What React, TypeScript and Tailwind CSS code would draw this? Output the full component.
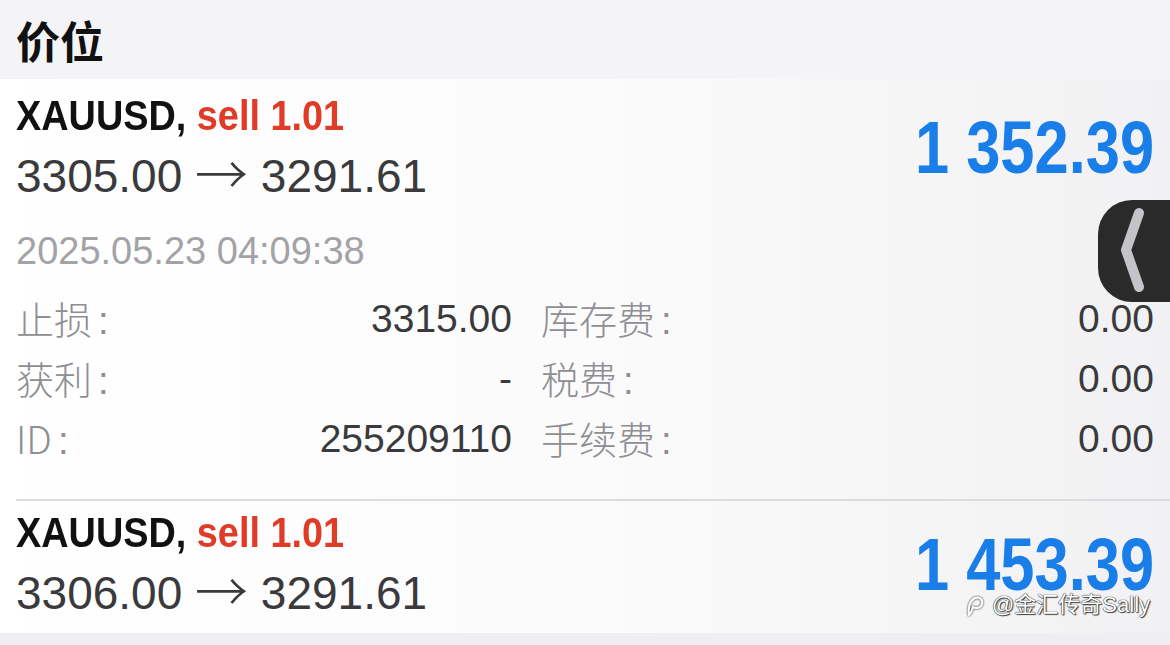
import React from 'react';

const latin = "font-['Liberation_Sans','Noto_Sans_CJK_SC',sans-serif]";

type Detail = { label: string; value: string };

function Label({ text }: { text: string }) {
  return (
    <span className="text-[38px] font-light text-[#8e8e93] font-['Noto_Sans_CJK_SC',sans-serif]">
      {text}
      <span className="ml-[6px] font-['Liberation_Sans',sans-serif]">:</span>
    </span>
  );
}

function DetailGrid({ rows }: { rows: [Detail, Detail][] }) {
  return (
    <div className="mt-[18px] grid grid-cols-[496px_1fr] gap-x-[29px] pr-4">
      {rows.map(([l, r], i) => (
        <React.Fragment key={i}>
          <div className="flex h-[60px] items-center justify-between">
            <Label text={l.label} />
            <span className={`${latin} text-[39px] text-[#3a3a3c]`}>{l.value}</span>
          </div>
          <div className="flex h-[60px] items-center justify-between">
            <Label text={r.label} />
            <span className={`${latin} text-[39px] text-[#3a3a3c]`}>{r.value}</span>
          </div>
        </React.Fragment>
      ))}
    </div>
  );
}

function PositionHead({ open, close, profit }: { open: string; close: string; profit: string }) {
  return (
    <div className="flex items-center justify-between pr-4">
      <div className="flex flex-col">
        <div className={`${latin} origin-left scale-x-[0.88] text-[43px] leading-[50px] font-bold text-[#111]`}>
          XAUUSD, <span className="text-[#df3b27]">sell 1.01</span>
        </div>
        <div className={`${latin} mt-[6px] text-[46px] leading-[60px] text-[#3a3a3c]`}>
          {open}{' '}
          <span className="align-[-3px] text-[53px] leading-[0] font-light font-['Noto_Sans_CJK_SC',sans-serif]">→</span>{' '}
          {close}
        </div>
      </div>
      <div className={`${latin} origin-right scale-x-[0.83] text-[74px] leading-none font-bold text-[#1a7ee9]`}>
        {profit}
      </div>
    </div>
  );
}

export default function App() {
  return (
    <div className="relative h-[645px] w-full overflow-hidden bg-[#efeff1]">
      <div className="flex h-[79px] items-center bg-[#f4f4f6] px-4">
        <span className="text-[44px] font-bold text-[#111] font-['Noto_Sans_CJK_SC',sans-serif]">价位</span>
      </div>

      <div className="bg-linear-to-r from-white via-[#fbfbfb] to-[#f1f1f3]">
        <div className="ml-4 border-b-2 border-[#dcdcde] pt-[11px] pb-[30px]">
          <PositionHead open="3305.00" close="3291.61" profit="1 352.39" />
          <div className={`${latin} mt-[25px] text-[38px] leading-[40px] text-[#a3a3a7]`}>
            2025.05.23 04:09:38
          </div>
          <DetailGrid
            rows={[
              [{ label: '止损', value: '3315.00' }, { label: '库存费', value: '0.00' }],
              [{ label: '获利', value: '-' }, { label: '税费', value: '0.00' }],
              [{ label: 'ID', value: '255209110' }, { label: '手续费', value: '0.00' }],
            ]}
          />
        </div>
        <div className="ml-4 pt-[6px] pb-[10px]">
          <PositionHead open="3306.00" close="3291.61" profit="1 453.39" />
        </div>
      </div>

      {/* side drawer handle */}
      <div className="absolute right-0 top-[200px] flex h-[102px] w-[72px] items-center rounded-l-[34px] bg-[#2a2a2a] pl-[22px]">
        <svg width="30" height="90" viewBox="0 0 30 90">
          <path d="M19 7 L6 44 L19 81" fill="none" stroke="#c4c4c8" strokeWidth="10" strokeLinecap="round" strokeLinejoin="round" />
        </svg>
      </div>

      {/* watermark */}
      <div className="absolute left-[965px] top-[588px] flex items-center gap-[7px] text-white [text-shadow:0_0_1px_#222,0_0_1px_#222,1px_1px_1px_#444]">
        <svg width="20" height="24" viewBox="0 0 20 24" className="drop-shadow-[0_0_1px_#222]">
          <path d="M4 22 C3 16 4 8 10 5 C15 3 18 7 17 11 C16 15 11 16 8 14 M8 14 C7 17 6 20 4 22" fill="none" stroke="#fff" strokeWidth="2" strokeLinecap="round" />
        </svg>
        <span className="text-[22px] font-['Liberation_Sans','Noto_Sans_CJK_SC',sans-serif]">@金汇传奇Sally</span>
      </div>
    </div>
  );
}
